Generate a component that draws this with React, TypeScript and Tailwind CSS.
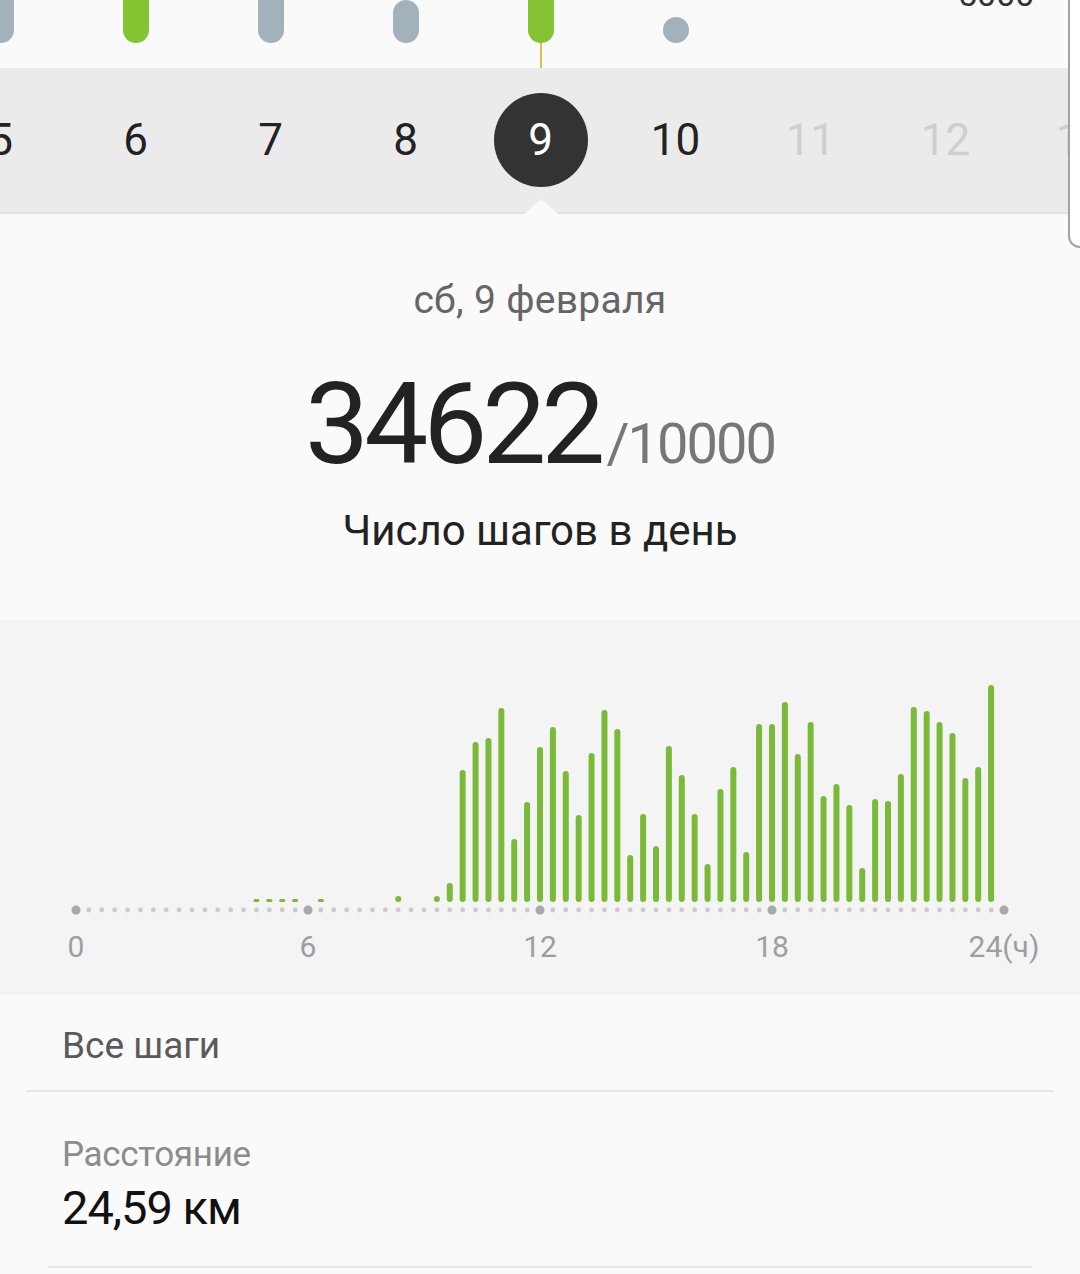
import React from "react";

const FONT = "font-['Roboto','Noto_Sans',sans-serif]";

type TopBar = { kind: "gray" | "green" | "dot" | "none"; tall?: boolean };

const DAYS: Array<{ label: string; faded?: boolean; selected?: boolean; bar: TopBar }> = [
  { label: "5", bar: { kind: "gray", tall: true } },
  { label: "6", bar: { kind: "green", tall: true } },
  { label: "7", bar: { kind: "gray", tall: true } },
  { label: "8", bar: { kind: "gray" } },
  { label: "9", selected: true, bar: { kind: "green", tall: true } },
  { label: "10", bar: { kind: "dot" } },
  { label: "11", faded: true, bar: { kind: "none" } },
  { label: "12", faded: true, bar: { kind: "none" } },
  { label: "13", faded: true, bar: { kind: "none" } },
];

// slot index (3 per hour) -> top y of bar in page pixels
const BARS: Array<[number, number]> = [
  [14, 899], [15, 899], [16, 899], [17, 899], [19, 899],
  [25, 896], [28, 896], [29, 883], [30, 770], [31, 742], [32, 738], [33, 708],
  [34, 839], [35, 802], [36, 747], [37, 727], [38, 771], [39, 815], [40, 753],
  [41, 710], [42, 729], [43, 855], [44, 814], [45, 846], [46, 746], [47, 775],
  [48, 814], [49, 864], [50, 789], [51, 767], [52, 852], [53, 724], [54, 724],
  [55, 702], [56, 754], [57, 722], [58, 796], [59, 784], [60, 805], [61, 868],
  [62, 799], [63, 801], [64, 774], [65, 707], [66, 711], [67, 722], [68, 733],
  [69, 778], [70, 767], [71, 685],
];

const CHART_TOP = 620;
const X0 = 76;
const STEP = 928 / 72;
const BASE = 902;

function HourlyChart() {
  const dots = Array.from({ length: 73 }, (_, k) => k);
  const labels = ["0", "6", "12", "18", "24(ч)"];
  return (
    <svg width="1080" height="375" viewBox="0 0 1080 375" className="block">
      {BARS.map(([i, top]) => {
        const h = BASE - top;
        return (
          <rect
            key={i}
            x={X0 + i * STEP - 3}
            y={top - CHART_TOP}
            width={6}
            height={h}
            rx={Math.min(3, h / 2)}
            fill="#7aba38"
          />
        );
      })}
      {dots.map((k) => {
        const big = k % 18 === 0;
        return (
          <circle
            key={k}
            cx={X0 + k * STEP}
            cy={910 - CHART_TOP}
            r={big ? 4.5 : 2.4}
            fill={big ? "#a8a8a8" : "#cbcbcb"}
          />
        );
      })}
      {labels.map((l, j) => (
        <text
          key={l}
          x={X0 + j * 232}
          y={957 - CHART_TOP}
          textAnchor="middle"
          fontSize={30}
          fill="#9e9e9e"
          fontFamily="Roboto, sans-serif"
        >
          {l}
        </text>
      ))}
    </svg>
  );
}

function MiniBar({ bar }: { bar: TopBar }) {
  if (bar.kind === "none") return null;
  if (bar.kind === "dot") return <div className="w-[26px] h-[26px] rounded-full bg-[#a3b1ba]" />;
  const color = bar.kind === "green" ? "bg-[#84c332]" : "bg-[#a3b1ba]";
  return <div className={`w-[26px] h-[43px] ${bar.tall ? "rounded-b-[13px]" : "rounded-full"} ${color}`} />;
}

function WeekStrip() {
  return (
    <div className="relative overflow-hidden mr-[12px]">
      <div className="relative h-[68px] overflow-hidden">
        <div className="flex -ml-[67px]">
          {DAYS.map((d) => (
            <div key={d.label} className="w-[135px] shrink-0 h-[68px] flex flex-col items-center justify-end">
              <MiniBar bar={d.bar} />
              <div className={`h-[25px] w-[2px] ${d.selected ? "bg-[#e3bd45]" : "bg-transparent"}`} />
            </div>
          ))}
        </div>
        <div className="absolute left-[958px] top-[-23px] text-[34px] leading-none text-[#333]">5000</div>
      </div>
      <div className="h-[146px] bg-[#ebebeb] border-b-2 border-[#e2e2e2]">
        <div className="flex -ml-[67px] h-full">
          {DAYS.map((d) => (
            <div key={d.label} className="relative w-[135px] shrink-0 h-full flex items-center justify-center">
              {d.selected ? (
                <div className="w-[94px] h-[94px] rounded-full bg-[#333333] flex items-center justify-center text-[44px] leading-none text-white">
                  {d.label}
                </div>
              ) : (
                <span className={`text-[44px] leading-none ${d.faded ? "text-[#cfcfcf]" : "text-[#222]"}`}>
                  {d.label}
                </span>
              )}
              {d.selected && (
                <div className="absolute bottom-[-2px] left-1/2 -translate-x-1/2 w-0 h-0 border-l-[17px] border-r-[17px] border-b-[15px] border-l-transparent border-r-transparent border-b-[#fafafa]" />
              )}
            </div>
          ))}
        </div>
      </div>
    </div>
  );
}

export default function App() {
  return (
    <div className={`relative w-[1080px] h-[1274px] overflow-hidden bg-[#fafafa] ${FONT}`}>
      <WeekStrip />
      <div className="absolute right-0 top-0 w-[12px] h-[248px] border-l-2 border-b-2 border-[#a3a3a3] rounded-bl-[12px] bg-white" />

      <div className="mt-[67px] text-center text-[39px] leading-none tracking-[0.3px] text-[#666]">сб, 9 февраля</div>

      <div className="mt-[47px] flex items-baseline justify-center">
        <span className="text-[114px] leading-none tracking-[-5px] text-[#222]">34622</span>
        <span className="ml-[6px] text-[56px] leading-none tracking-[-2px] text-[#777]">/10000</span>
      </div>

      <div className="mt-[29px] text-center text-[42px] leading-none text-[#222]">Число шагов в день</div>

      <div className="mt-[68px] h-[375px] bg-[#f4f4f4]">
        <HourlyChart />
      </div>

      <div className="pt-[32px] pb-[26px] pl-[62px] text-[37px] leading-none text-[#5a5a5a]">Все шаги</div>
      <div className="mx-[26px] h-[2px] bg-[#e8e8e8]" />

      <div className="pl-[62px]">
        <div className="mt-[45px] text-[35px] leading-none tracking-[-0.3px] text-[#8c8c8c]">Расстояние</div>
        <div className="mt-[12px] text-[47px] leading-none tracking-[-1px] text-[#111]">24,59 км</div>
      </div>
      <div className="mt-[35px] mx-[48px] h-[2px] bg-[#e8e8e8]" />
    </div>
  );
}
